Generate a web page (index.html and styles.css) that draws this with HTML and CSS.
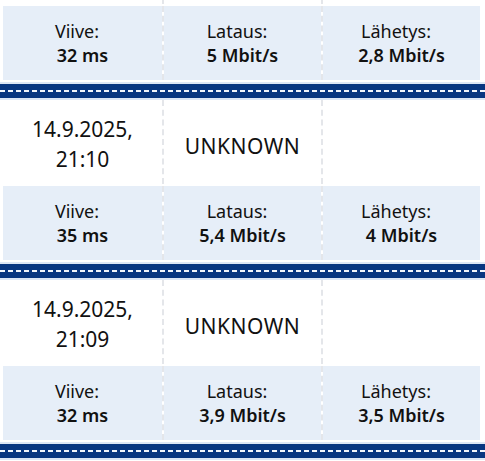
FILE: index.html
```html
<!DOCTYPE html>
<html lang="fi">
<head>
<meta charset="utf-8">
<link rel="stylesheet" href="styles.css">
</head>
<body>
<div class="list">
  <section class="record">
    <div class="row stub">
      <div class="cell"></div>
      <div class="cell"></div>
      <div class="cell"></div>
    </div>
    <div class="row stats">
      <div class="cell"><span class="label">Viive:</span><span class="value">32 ms</span></div>
      <div class="cell"><span class="label">Lataus:</span><span class="value">5 Mbit/s</span></div>
      <div class="cell"><span class="label">Lähetys:</span><span class="value">2,8 Mbit/s</span></div>
    </div>
    <div class="sep"><div class="dash"></div></div>
  </section>
  <section class="record">
    <div class="row head">
      <div class="cell date">14.9.2025,<br>21:10</div>
      <div class="cell status">UNKNOWN</div>
      <div class="cell"></div>
    </div>
    <div class="row stats">
      <div class="cell"><span class="label">Viive:</span><span class="value">35 ms</span></div>
      <div class="cell"><span class="label">Lataus:</span><span class="value">5,4 Mbit/s</span></div>
      <div class="cell"><span class="label">Lähetys:</span><span class="value">4 Mbit/s</span></div>
    </div>
    <div class="sep"><div class="dash"></div></div>
  </section>
  <section class="record">
    <div class="row head">
      <div class="cell date">14.9.2025,<br>21:09</div>
      <div class="cell status">UNKNOWN</div>
      <div class="cell"></div>
    </div>
    <div class="row stats">
      <div class="cell"><span class="label">Viive:</span><span class="value">32 ms</span></div>
      <div class="cell"><span class="label">Lataus:</span><span class="value">3,9 Mbit/s</span></div>
      <div class="cell"><span class="label">Lähetys:</span><span class="value">3,5 Mbit/s</span></div>
    </div>
    <div class="sep"><div class="dash"></div></div>
  </section>
</div>
</body>
</html>
```
FILE: styles.css
```css
*, *::before, *::after {
  box-sizing: border-box;
}
html, body {
  margin: 0;
  padding: 0;
  background: #fff;
  overflow: hidden;
}
body {
  font-family: "Noto Sans", "Open Sans", sans-serif;
  color: #111;
}
.record {
  display: flex;
  flex-direction: column;
}
.row {
  display: grid;
  grid-template-columns: 1fr 1fr 1fr;
  padding: 0 5px 0 3px;
  margin-bottom: 2px;
}
.cell {
  display: flex;
  flex-direction: column;
  align-items: center;
  justify-content: center;
  text-align: center;
  background-clip: padding-box;
}
.cell + .cell {
  border-left: 2px dashed #e4e6ea;
}
.stub .cell {
  height: 4px;
}
.head .cell {
  height: 84px;
  background-color: #fff;
}
.date {
  font-size: 21px;
  line-height: 30px;
  padding-top: 4px;
}
.status {
  font-size: 21px;
  letter-spacing: 0.5px;
  padding-top: 8px;
}
.stats .cell {
  height: 74px;
  background-color: #e6eef8;
  font-size: 18px;
  line-height: 24px;
}
.label {
  display: block;
  padding-right: 11px;
}
.value {
  display: block;
  font-weight: 600;
}
.sep {
  height: 18px;
  background: #083680;
  border-top: 2px solid #dde7f5;
  border-bottom: 2px solid #dde7f5;
  display: flex;
  align-items: center;
}
.dash {
  width: 100%;
  height: 2px;
  background-image: repeating-linear-gradient(90deg, #f2f5fa 0 5px, transparent 5px 8px);
}
```
